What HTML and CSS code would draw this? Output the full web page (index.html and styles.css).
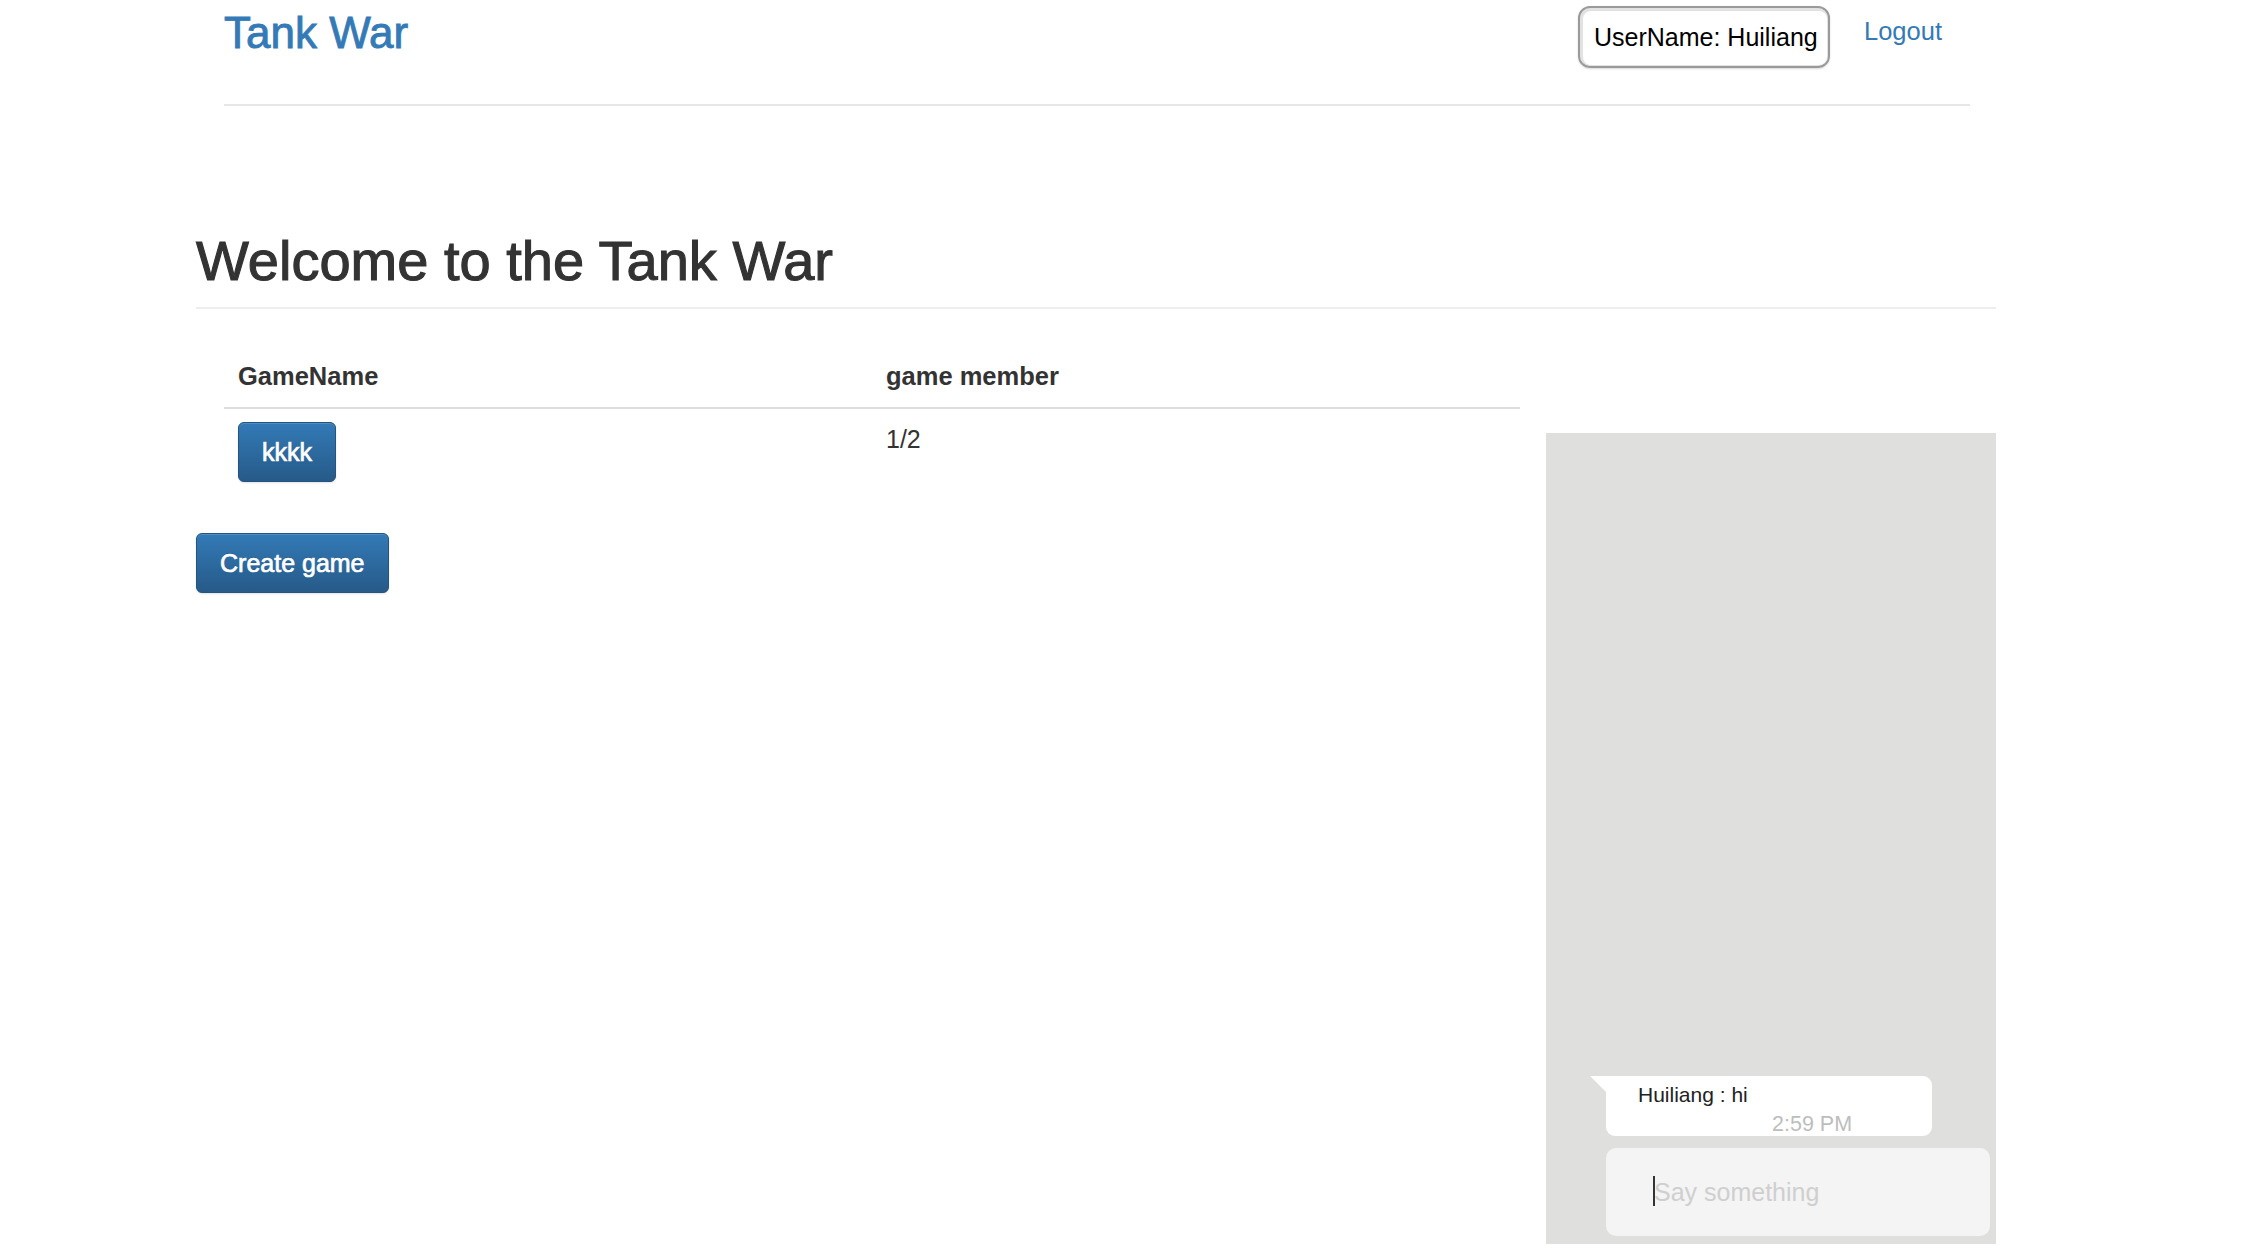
FILE: index.html
```html
<!DOCTYPE html>
<html lang="en">
<head>
<meta charset="utf-8">
<title>Tank War</title>
<link rel="stylesheet" href="styles.css">
</head>
<body>
<header class="topbar">
  <a class="brand" href="#">Tank War</a>
  <div class="user-area">
    <div class="username-box">UserName: Huiliang</div>
    <a class="logout" href="#">Logout</a>
  </div>
</header>

<main class="container">
  <div class="page-header">
    <h1>Welcome to the Tank War</h1>
  </div>
  <div class="content-row">
    <section class="games">
      <table class="game-table">
        <thead>
          <tr><th>GameName</th><th>game member</th></tr>
        </thead>
        <tbody>
          <tr>
            <td><button class="btn">kkkk</button></td>
            <td>1/2</td>
          </tr>
        </tbody>
      </table>
      <button class="btn create-btn">Create game</button>
    </section>
    <aside class="chat">
      <div class="chat-messages">
        <div class="bubble">
          <div class="bubble-text">Huiliang : hi</div>
          <div class="bubble-time">2:59 PM</div>
        </div>
      </div>
      <div class="chat-input-wrap">
        <input class="chat-input" type="text" placeholder="Say something">
        <span class="caret"></span>
      </div>
    </aside>
  </div>
</main>
</body>
</html>
```

FILE: styles.css
```css
* { box-sizing: border-box; }

html, body {
  margin: 0;
  padding: 0;
  background: #ffffff;
}

body {
  font-family: "Liberation Sans", Arial, Helvetica, sans-serif;
  font-size: 25px;
  color: #333333;
  width: 2248px;
  height: 1260px;
  overflow: hidden;
}

a { text-decoration: none; }

/* ---------- top bar ---------- */
.topbar {
  margin-left: 224px;
  width: 1746px;
  height: 106px;
  border-bottom: 2px solid #e6e6e6;
  display: flex;
  justify-content: space-between;
  align-items: flex-start;
}

.brand {
  display: block;
  margin-top: 9px;
  font-size: 44px;
  line-height: 47px;
  color: #337ab7;
  -webkit-text-stroke: 0.9px #337ab7;
}

.user-area {
  display: flex;
  align-items: flex-start;
  margin-right: 28px;
}

.username-box {
  margin-top: 6px;
  width: 252px;
  height: 62px;
  padding-left: 14px;
  display: flex;
  align-items: center;
  border: 2px solid #9a9a9a;
  border-radius: 12px;
  box-shadow: inset 1px 1px 0 2px #e2e2e2, 0 1px 2px rgba(0, 0, 0, 0.15);
  color: #000000;
  font-size: 25px;
  white-space: nowrap;
}

.logout {
  margin-left: 34px;
  margin-top: 16px;
  font-size: 25.5px;
  line-height: 30px;
  color: #337ab7;
}

/* ---------- main ---------- */
.container {
  margin-left: 196px;
  width: 1800px;
}

.page-header {
  margin-top: 125px;
  padding-bottom: 16px;
  border-bottom: 2px solid #eeeeee;
}

.page-header h1 {
  margin: 0;
  font-size: 56px;
  line-height: 60px;
  font-weight: normal;
  color: #333333;
  -webkit-text-stroke: 1.1px #333333;
}

.content-row {
  display: flex;
  gap: 26px;
}

.games {
  width: 1324px;
}

.game-table {
  margin-top: 35px;
  margin-left: 28px;
  width: 1296px;
  border-collapse: collapse;
  table-layout: fixed;
}

.game-table th {
  text-align: left;
  font-weight: bold;
  font-size: 25.5px;
  line-height: 36px;
  padding: 14px 14px 13px;
  border-bottom: 2px solid #dddddd;
  width: 50%;
}

.game-table td {
  vertical-align: top;
  font-size: 25px;
  line-height: 36px;
  padding: 12px 14px 13px;
}

.btn {
  display: inline-block;
  font-family: "Liberation Sans", Arial, Helvetica, sans-serif;
  font-size: 25px;
  line-height: 36px;
  padding: 11px 23px;
  color: #ffffff;
  background-color: #2d6ca2;
  background-image: linear-gradient(to bottom, #337ab7 0%, #265a88 100%);
  border: 1px solid #245580;
  border-radius: 6px;
  box-shadow: inset 0 1px 0 rgba(255, 255, 255, 0.15), 0 1px 2px rgba(0, 0, 0, 0.12);
  text-shadow: 0 -1px 0 rgba(0, 0, 0, 0.2);
  -webkit-text-stroke: 0.7px #ffffff;
  cursor: pointer;
}

td .btn {
  margin-top: 1px;
}

.create-btn {
  margin-top: 38px;
}

/* ---------- chat ---------- */
.chat {
  margin-top: 124px;
  width: 450px;
  height: 811px;
  background: #dfdfdd;
  display: flex;
  flex-direction: column;
  justify-content: flex-end;
  padding: 0 6px 8px 60px;
}

.chat-messages {
  display: flex;
  flex-direction: column;
}

.bubble {
  position: relative;
  width: 326px;
  height: 60px;
  background: #ffffff;
  border-radius: 0 9px 9px 9px;
  padding: 4px 0 0 32px;
  font-size: 21px;
}

.bubble::before {
  content: "";
  position: absolute;
  left: -16px;
  top: 0;
  border-top: 16px solid #ffffff;
  border-left: 16px solid transparent;
}

.bubble-text {
  line-height: 30px;
  color: #222222;
}

.bubble-time {
  line-height: 28px;
  margin-left: 134px;
  font-size: 21.5px;
  color: #bdbdbd;
}

.chat-input-wrap {
  position: relative;
  margin-top: 12px;
}

.chat-input {
  display: block;
  width: 384px;
  height: 88px;
  border: none;
  outline: none;
  border-radius: 10px;
  background: #f4f4f4;
  padding: 0 0 0 48px;
  font-family: "Liberation Sans", Arial, Helvetica, sans-serif;
  font-size: 25px;
  color: #333333;
}

.chat-input::placeholder {
  color: #cfcfcf;
}

.caret {
  position: absolute;
  left: 47px;
  top: 28px;
  width: 2px;
  height: 30px;
  background: #333333;
}
```
